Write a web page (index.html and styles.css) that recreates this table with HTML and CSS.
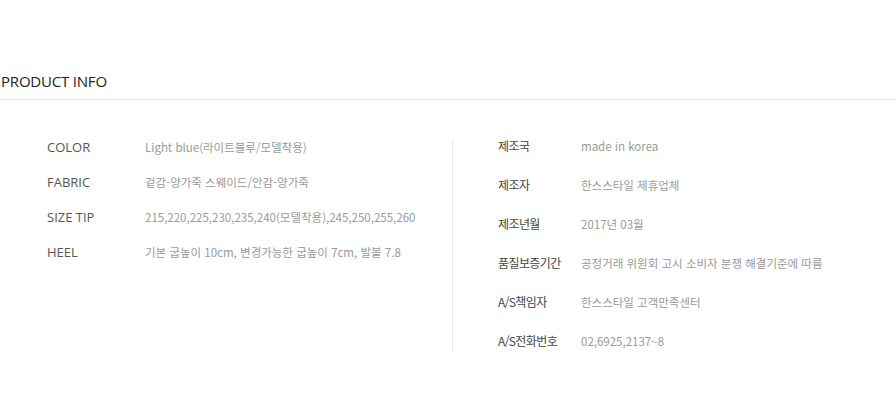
FILE: index.html
```html
<!DOCTYPE html>
<html lang="ko">
<head>
<meta charset="utf-8">
<link rel="stylesheet" href="styles.css">
</head>
<body>
<div class="page">
  <h2 class="title">PRODUCT INFO</h2>
  <div class="info">
    <div class="col col-left">
      <div class="row"><span class="label">COLOR</span><span class="value">Light blue(라이트블루/모델착용)</span></div>
      <div class="row"><span class="label">FABRIC</span><span class="value">겉감-양가죽 스웨이드/안감-양가죽</span></div>
      <div class="row"><span class="label">SIZE TIP</span><span class="value">215,220,225,230,235,240(모델착용),245,250,255,260</span></div>
      <div class="row"><span class="label">HEEL</span><span class="value">기본 굽높이 10cm, 변경가능한 굽높이 7cm, 발볼 7.8</span></div>
    </div>
    <div class="col col-right">
      <div class="row"><span class="label">제조국</span><span class="value">made in korea</span></div>
      <div class="row"><span class="label">제조자</span><span class="value">한스스타일 제휴업체</span></div>
      <div class="row"><span class="label">제조년월</span><span class="value">2017년 03월</span></div>
      <div class="row"><span class="label">품질보증기간</span><span class="value">공정거래 위원회 고시 소비자 분쟁 해결기준에 따름</span></div>
      <div class="row"><span class="label">A/S책임자</span><span class="value">한스스타일 고객만족센터</span></div>
      <div class="row"><span class="label">A/S전화번호</span><span class="value">02,6925,2137~8</span></div>
    </div>
  </div>
</div>
</body>
</html>
```
FILE: styles.css
```css
html, body {
  margin: 0;
  padding: 0;
  background: #fff;
}
.page {
  width: 895px;
  padding-top: 71px;
}
.title {
  margin: 0;
  padding: 0 0 8px 1px;
  font-family: "Open Sans", "Liberation Sans", sans-serif;
  font-weight: 400;
  font-size: 15px;
  line-height: 20px;
  letter-spacing: -0.2px;
  color: #222;
  border-bottom: 1px solid #e3e3e3;
  width: 894px;
}
.info {
  display: flex;
  padding-top: 40px;
}
.col {
  display: flex;
  flex-direction: column;
}
.col-left {
  width: 405px;
  padding-left: 47px;
  gap: 21px;
}
.col-right {
  border-left: 1px solid #e8e8e8;
  padding-left: 45px;
  padding-bottom: 3px;
  gap: 25px;
}
.row {
  display: flex;
  align-items: center;
  height: 14px;
  line-height: 14px;
}
.label {
  flex: none;
  color: #555;
  white-space: nowrap;
}
.col-left .label {
  width: 98px;
  font-family: "Open Sans", "Liberation Sans", sans-serif;
  font-size: 13px;
}
.col-right .label {
  width: 83px;
  font-family: "Noto Sans CJK KR", "Liberation Sans", sans-serif;
  font-size: 12px;
  letter-spacing: -0.6px;
  color: #444;
  position: relative;
  top: -1px;
}
.value {
  font-family: "Noto Sans CJK KR", "Liberation Sans", sans-serif;
  font-size: 11.5px;
  color: #999;
  white-space: nowrap;
}
.col-right .value {
  position: relative;
  top: -1px;
}
```
